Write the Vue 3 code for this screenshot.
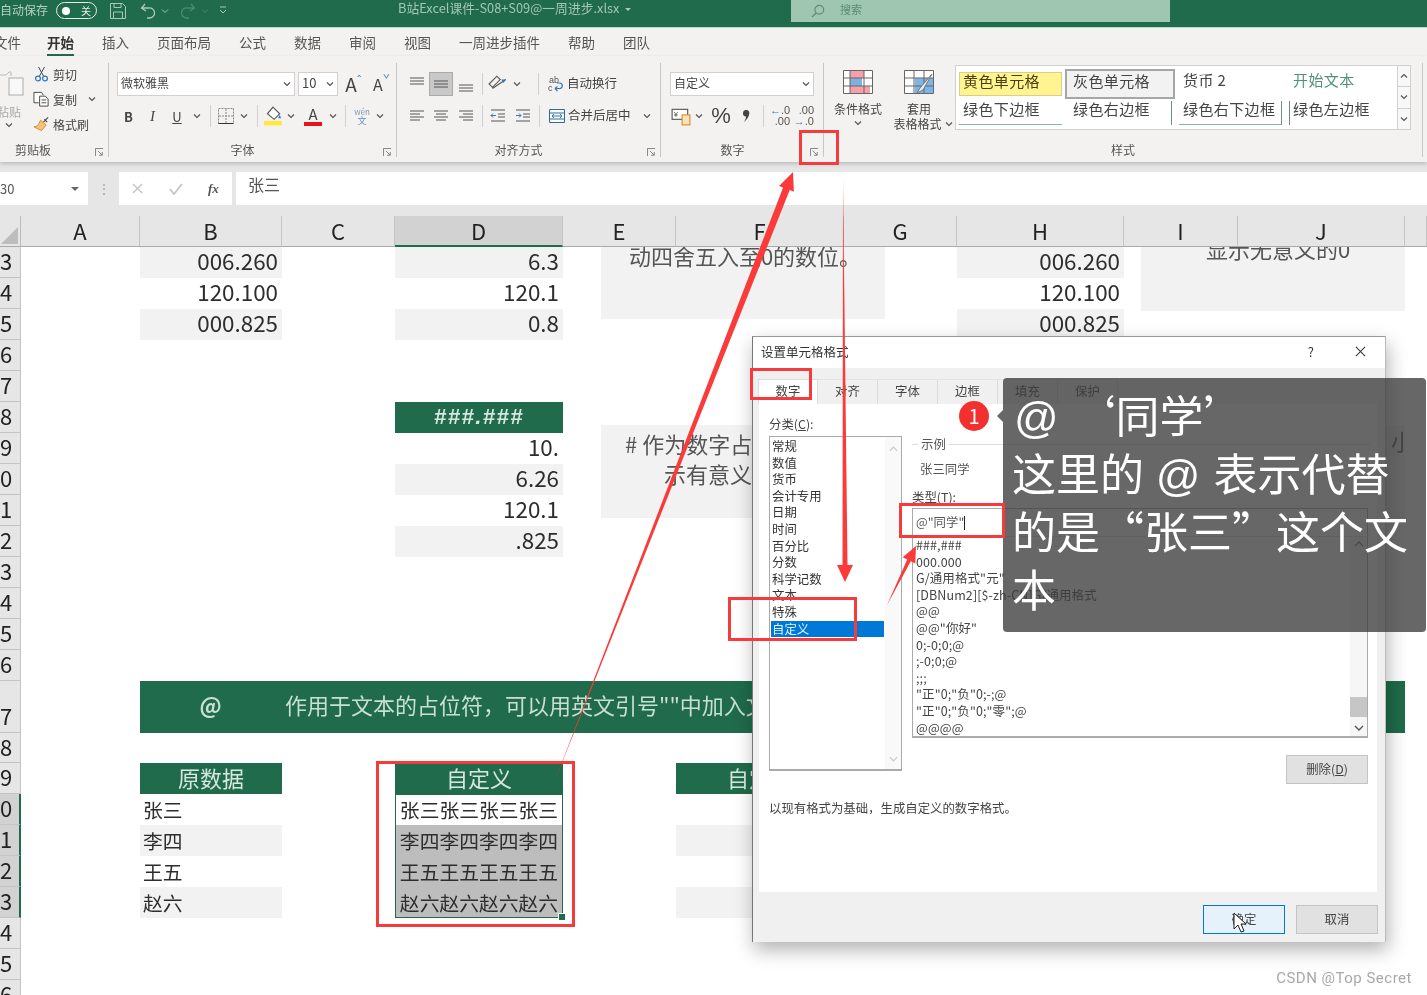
<script setup>
const tabs = ['开始', '插入', '页面布局', '公式', '数据', '审阅', '视图', '一周进步插件', '帮助', '团队']
const cols = ['A', 'B', 'C', 'D', 'E', 'F', 'G', 'H', 'I', 'J', '']
const rowHeads = Array.from({ length: 24 }, (_, i) => {
  const n = i + 3
  return { n, label: String(n % 10), on: n >= 20 && n <= 23, tall: n === 17 }
})
const colIdx = { B: 3, D: 5, F: 7, H: 9 }
const cells = [
  ['B', 3, '006.260', 'end fill'], ['B', 4, '120.100', 'end'], ['B', 5, '000.825', 'end fill'],
  ['D', 3, '6.3', 'end fill'], ['D', 4, '120.1', 'end'], ['D', 5, '0.8', 'end fill'],
  ['H', 3, '006.260', 'end fill'], ['H', 4, '120.100', 'end'], ['H', 5, '000.825', 'end fill'],
  ['D', 8, '###.###', 'mid head hash'], ['D', 9, '10.', 'end'], ['D', 10, '6.26', 'end fill'],
  ['D', 11, '120.1', 'end'], ['D', 12, '.825', 'end fill'],
  ['B', 19, '原数据', 'mid head'], ['D', 19, '自定义', 'mid head'], ['F', 19, '自定义', 'mid head'],
  ['B', 20, '张三', 'start name'], ['B', 21, '李四', 'start name fill'], ['B', 22, '王五', 'start name'], ['B', 23, '赵六', 'start name fill'],
  ['D', 20, '张三张三张三张三', 'mid name'], ['D', 21, '李四李四李四李四', 'mid name picked'],
  ['D', 22, '王五王五王五王五', 'mid name picked'], ['D', 23, '赵六赵六赵六赵六', 'mid name picked'],
  ['F', 21, '', 'fill'], ['F', 23, '', 'fill']
].map(([c, r, text, cls]) => ({ key: c + r, text, cls, style: { gridColumn: colIdx[c], gridRow: r - 1 } }))
const categories = ['常规', '数值', '货币', '会计专用', '日期', '时间', '百分比', '分数', '科学记数', '文本', '特殊', '自定义']
const formats = ['###,###', '000.000', 'G/通用格式"元"', '[DBNum2][$-zh-CN]G/通用格式', '@@', '@@"你好"', '0;-0;0;@', ';-0;0;@', ';;;', '"正"0;"负"0;-;@', '"正"0;"负"0;"零";@', '@@@@']
const dialogTabs = ['数字', '对齐', '字体', '边框', '填充', '保护']
</script>

<template>
  <div class="app">
    <svg class="defs" width="0" height="0">
      <defs>
        <symbol id="chev" viewBox="0 0 8 6"><path d="M1 1.5l3 3 3-3" fill="none" stroke="#555" stroke-width="1.2" /></symbol>
        <symbol id="launch" viewBox="0 0 10 10"><path d="M.5 9V.5H9M3 3l5 5M8 4.5V8H4.5" fill="none" stroke="#777" stroke-width="1" /></symbol>
      </defs>
    </svg>

    <header class="titlebar">
      <span class="autosave">自动保存</span>
      <span class="toggle"><i></i><b>关</b></span>
      <svg class="tb-save" viewBox="0 0 16 16"><path d="M.5.5h12l3 3v12H.5zM4 .5v4h7v-4M3.5 15.5V9h9v6.5" fill="none" stroke="#a9c9b8" /></svg>
      <svg class="tb-undo" viewBox="0 0 16 16"><path d="M5 1L1.5 5 6 8M2 5h7a5 5 0 0 1 1 10H7" fill="none" stroke="#a9c9b8" stroke-width="1.3" /></svg>
      <svg class="tb-c1" viewBox="0 0 8 6"><path d="M1 1.5l3 3 3-3" fill="none" stroke="#a9c9b8" /></svg>
      <svg class="tb-redo" viewBox="0 0 16 16"><path d="M11 1l3.5 4L10 8M14 5H7a5 5 0 0 0-1 10h3" fill="none" stroke="#4f8a6e" stroke-width="1.3" /></svg>
      <svg class="tb-c2" viewBox="0 0 8 6"><path d="M1 1.5l3 3 3-3" fill="none" stroke="#4f8a6e" /></svg>
      <svg class="tb-c3" viewBox="0 0 8 8"><path d="M1 1h6M1 4l3 3 3-3" fill="none" stroke="#a9c9b8" /></svg>
      <span class="doc">B站Excel课件-S08+S09@一周进步.xlsx</span>
      <span class="doc-c"></span>
      <div class="search">
        <svg viewBox="0 0 16 16"><circle cx="9.5" cy="6.5" r="5" fill="none" stroke="#5d8a73" stroke-width="1.3" /><path d="M6 10l-5 5" stroke="#5d8a73" stroke-width="1.5" /></svg>
        <span>搜索</span>
      </div>
    </header>

    <nav class="tabs">
      <span class="tab-file">文件</span>
      <span v-for="t in tabs" :key="t" class="tab" :class="{ on: t === '开始' }">{{ t }}</span>
    </nav>

    <section class="ribbon">
      <div class="group g-clip">
        <div class="clip-body">
          <div class="paste">
            <svg viewBox="0 0 24 30"><path d="M-4 6h10l3-3h2v4" fill="none" stroke="#bbb" /><rect x="9" y="9" width="14" height="17" fill="#f8f8f8" stroke="#aaa" /></svg>
            <span>粘贴</span>
            <svg class="chev c-paste"><use href="#chev" /></svg>
          </div>
          <div class="clip-list">
            <div class="clip-row">
              <svg viewBox="0 0 14 16"><path d="M4 1l5 9M10 1L5 10" fill="none" stroke="#444" /><circle cx="3.5" cy="12.5" r="2.4" fill="none" stroke="#2a78c0" stroke-width="1.2" /><circle cx="10.5" cy="12.5" r="2.4" fill="none" stroke="#2a78c0" stroke-width="1.2" /></svg>
              <span>剪切</span>
            </div>
            <div class="clip-row">
              <svg viewBox="0 0 18 16"><path d="M6 12H1V1h8l2 3M7 5h6l3 3v7.500H7zM9 9h5M9 12h5" fill="#fff" stroke="#444" /></svg>
              <span>复制</span>
              <svg class="chev c-copy"><use href="#chev" /></svg>
            </div>
            <div class="clip-row">
              <svg viewBox="0 0 18 16"><path d="M11 6L16 1M12 3l3 3" stroke="#555" stroke-width="1.4" fill="none" /><path d="M8 4l6 5-5 6-8-4c3 0 5-2 7-7z" fill="#f6c27a" stroke="#d98a2b" /></svg>
              <span>格式刷</span>
            </div>
          </div>
        </div>
        <div class="cap cap-clip">剪贴板</div>
        <svg class="launch"><use href="#launch" /></svg>
      </div>

      <div class="group g-font">
        <div class="row font-r1">
          <div class="select"><span>微软雅黑</span><svg class="chev"><use href="#chev" /></svg></div>
          <div class="select sel-size"><span>10</span><svg class="chev"><use href="#chev" /></svg></div>
          <span class="grow">A<sup>ˆ</sup></span>
          <span class="grow small">A<sup class="blue">ˇ</sup></span>
        </div>
        <div class="row font-r2">
          <b class="fmt">B</b>
          <i class="fmt serif">I</i>
          <u class="fmt">U</u>
          <svg class="chev"><use href="#chev" /></svg>
          <span class="sep"></span>
          <svg class="ico16" viewBox="0 0 16 16"><path d="M.5.5h15v15H.5z" fill="none" stroke="#888" stroke-dasharray="2 1" /><path d="M8 1v14M1 8h14" stroke="#888" stroke-dasharray="2 1" /><path d="M.5 15.500h15" stroke="#333" /></svg>
          <svg class="chev"><use href="#chev" /></svg>
          <span class="sep"></span>
          <svg class="ico18" viewBox="0 0 18 18"><path d="M9 1l6 6-5 5-6-5z" fill="#fff" stroke="#555" /><path d="M15 8l1.500 3-3 0z" fill="#3a7fc4" /><rect x="1" y="13.500" width="16" height="4" fill="#ffe93b" /></svg>
          <svg class="chev"><use href="#chev" /></svg>
          <span class="font-a">A<i></i></span>
          <svg class="chev"><use href="#chev" /></svg>
          <span class="sep"></span>
          <span class="wen">wén<i>文</i></span>
          <svg class="chev"><use href="#chev" /></svg>
        </div>
        <div class="cap cap-off">字体</div>
        <svg class="launch"><use href="#launch" /></svg>
      </div>

      <div class="group g-align">
        <div class="row al-r1">
          <svg class="ico16" viewBox="0 0 16 16"><path d="M1 2h14M1 5h14M1 8h14" stroke="#555" /></svg>
          <span class="boxed"><svg class="ico16" viewBox="0 0 16 16"><path d="M1 5h14M1 8h14M1 11h14" stroke="#555" /></svg></span>
          <svg class="ico16" viewBox="0 0 16 16"><path d="M1 9h14M1 12h14M1 15h14" stroke="#555" /></svg>
          <span class="sep"></span>
          <svg class="ico18" viewBox="0 0 18 18"><path d="M1 9l7-7 3 3-7 7zM4 13l12-8" fill="none" stroke="#555" /><path d="M16 5l-4 0 2 3z" fill="#2a78c0" /></svg>
          <svg class="chev"><use href="#chev" /></svg>
          <span class="sep sep-end"></span>
          <div class="lbl-btn wrap-btn">
            <svg class="ico16" viewBox="0 0 16 16"><text x="1" y="7" font-size="9" fill="#555" font-family="Liberation Sans">ab</text><text x="0" y="15" font-size="9" fill="#555" font-family="Liberation Sans">c</text><path d="M7 12.500h5a2.800 2.800 0 0 0 0-5.500H9M7 12.500l2.500-2M7 12.500l2.500 2.500" fill="none" stroke="#2a78c0" stroke-width="1.200" /></svg>
            <span>自动换行</span>
          </div>
        </div>
        <div class="row al-r2">
          <svg class="ico16" viewBox="0 0 16 16"><path d="M1 3h14M1 6h10M1 9h14M1 12h10" stroke="#555" /></svg>
          <svg class="ico16" viewBox="0 0 16 16"><path d="M1 3h14M3 6h10M1 9h14M3 12h10" stroke="#555" /></svg>
          <svg class="ico16" viewBox="0 0 16 16"><path d="M1 3h14M5 6h10M1 9h14M5 12h10" stroke="#555" /></svg>
          <span class="sep"></span>
          <svg class="ico16" viewBox="0 0 16 16"><path d="M1 2h14M8 6h7M8 9h7M1 13h14" stroke="#555" /><path d="M1 7.500h5M1 7.500l2-2M1 7.500l2 2" fill="none" stroke="#2a78c0" /></svg>
          <svg class="ico16" viewBox="0 0 16 16"><path d="M1 2h14M8 6h7M8 9h7M1 13h14" stroke="#555" /><path d="M1 7.500h5M6 7.500l-2-2M6 7.500l-2 2" fill="none" stroke="#2a78c0" /></svg>
          <span class="sep sep-end"></span>
          <div class="lbl-btn merge-btn">
            <svg class="ico16" viewBox="0 0 16 16"><path d="M.5 1.500h15v13H.5zM.5 5h15M.5 11h15" fill="#fff" stroke="#2c6e91" /><path d="M3 8h10M3 8l2-2M3 8l2 2M13 8l-2-2M13 8l-2 2" fill="none" stroke="#2a78c0" /></svg>
            <span>合并后居中</span>
            <svg class="chev c-merge"><use href="#chev" /></svg>
          </div>
        </div>
        <div class="cap cap-off">对齐方式</div>
        <svg class="launch"><use href="#launch" /></svg>
      </div>

      <div class="group g-num">
        <div class="row num-r1">
          <div class="select"><span>自定义</span><svg class="chev"><use href="#chev" /></svg></div>
        </div>
        <div class="row num-r2">
          <svg class="ico18" viewBox="0 0 18 18"><rect x="1" y="3" width="14" height="9" fill="#fff" stroke="#555" /><text x="2.500" y="10" font-size="7" fill="#555" font-family="Liberation Sans">¥</text><rect x="10" y="8" width="7" height="9" fill="#fbe3b8" stroke="#d98a2b" /></svg>
          <svg class="chev"><use href="#chev" /></svg>
          <span class="pct">%</span>
          <svg class="comma" viewBox="0 0 8 14"><path d="M4 1a3 3 0 0 1 2.800 3.500C6.500 8 4 11 1.500 13 3 10.500 3.500 9 3.500 7.500A3 3 0 0 1 4 1z" fill="#444" /></svg>
          <span class="sep"></span>
          <span class="dec"><em>←</em>.0<br />.00</span>
          <span class="dec">.00<br /><em>→</em>.0</span>
        </div>
        <div class="cap cap-off">数字</div>
        <svg class="launch"><use href="#launch" /></svg>
      </div>

      <div class="group g-style">
        <div class="style-body">
          <div class="big b-cond">
            <svg viewBox="0 0 30 24"><path d="M.5.500h29v23H.5z" fill="#fff" stroke="#666" /><path d="M7 1h14v7H7zM7 16h20v7H7z" fill="#f6a0a8" /><path d="M7 8h12v8H7z" fill="#7fb0e0" /><path d="M7 .5v23M21 .5v23M.5 8h29M.5 16h29" stroke="#666" fill="none" /></svg>
            <span>条件格式</span>
            <svg class="chev"><use href="#chev" /></svg>
          </div>
          <div class="big b-table">
            <svg viewBox="0 0 30 24"><path d="M.5.500h29v23H.5z" fill="#fff" stroke="#666" /><path d="M11 8h18v15H11z" fill="#7fb4e6" /><path d="M10 .5v23M20 .5v23M.5 8h29M.5 16h29" stroke="#666" fill="none" /><path d="M28 4L16 18l-3 5 6-3z" fill="#dff0f6" stroke="#777" /></svg>
            <span>套用</span>
            <span class="nowrap">表格格式<svg class="chev"><use href="#chev" /></svg></span>
          </div>
          <div class="gallery">
            <div class="gal-grid">
              <span class="gal yellow">黄色单元格</span>
              <span class="gal gray">灰色单元格</span>
              <span class="gal">货币 2</span>
              <span class="gal teal">开始文本</span>
              <span class="gal bot">绿色下边框</span>
              <span class="gal rt">绿色右边框</span>
              <span class="gal bot rt">绿色右下边框</span>
              <span class="gal lft">绿色左边框</span>
            </div>
            <div class="gal-scroll">
              <span><svg class="chev up"><use href="#chev" /></svg></span>
              <span><svg class="chev"><use href="#chev" /></svg></span>
              <span class="more"><svg class="chev"><use href="#chev" /></svg></span>
            </div>
          </div>
        </div>
        <div class="cap">样式</div>
      </div>
    </section>

    <section class="formula">
      <div class="namebox"><span>30</span><i></i></div>
      <span class="fdots">⋮</span>
      <div class="fx-btns">
        <svg viewBox="0 0 12 12"><path d="M1 1l10 10M11 1L1 11" stroke="#c4c4c4" stroke-width="1.5" /></svg>
        <svg viewBox="0 0 14 12"><path d="M1 6l4 5 8-10" fill="none" stroke="#c4c4c4" stroke-width="1.8" /></svg>
        <em>fx</em>
      </div>
      <div class="finput">张三</div>
    </section>

    <section class="sheet">
      <div class="corner"><i></i></div>
      <div v-for="(c, i) in cols" :key="i" class="colh" :class="{ on: c === 'D' }">{{ c }}</div>
      <div v-for="r in rowHeads" :key="r.n" class="rowh" :class="{ on: r.on, tall: r.tall }" :style="{ gridRow: r.n - 1 }">{{ r.label }}</div>
      <div v-for="c in cells" :key="c.key" class="cell" :class="c.cls" :style="c.style">{{ c.text }}</div>
      <div class="banner"><span class="b-at">@</span><span class="b-txt">作用于文本的占位符，可以用英文引号""中加入文</span></div>
      <div class="selection"><i></i></div>

      <div class="shape s1"><p>动四舍五入至0的数位。</p></div>
      <div class="shape s2"><p>显示无意义的0</p></div>
      <div class="shape s3"><p class="l1"># 作为数字占</p><p class="l2">示有意义</p></div>
      <div class="shape s4"><p>小</p></div>
    </section>

    <div class="dialog">
      <div class="d-title"><span>设置单元格格式</span><span class="d-help">?</span>
        <svg viewBox="0 0 12 12"><path d="M1 1l10 10M11 1L1 11" stroke="#333" stroke-width="1.1" /></svg>
      </div>
      <div class="d-tabs">
        <span v-for="(t, i) in dialogTabs" :key="t" class="d-tab" :class="{ on: i === 0 }">{{ t }}</span>
      </div>
      <div class="d-panel">
        <div class="d-main">
          <div class="d-left">
            <div class="d-lab">分类(<u>C</u>):</div>
            <div class="cat-list">
              <div v-for="c in categories" :key="c" class="cat" :class="{ on: c === '自定义' }">{{ c }}</div>
              <svg class="cat-up" viewBox="0 0 10 6"><path d="M1 5l4-4 4 4" fill="none" stroke="#c8c8c8" stroke-width="1.3" /></svg>
              <svg class="cat-down" viewBox="0 0 10 6"><path d="M1 1l4 4 4-4" fill="none" stroke="#c8c8c8" stroke-width="1.3" /></svg>
            </div>
          </div>
          <div class="d-right">
            <fieldset class="sample"><legend>示例</legend><div>张三同学</div></fieldset>
            <div class="d-lab type-lab">类型(<u>T</u>):</div>
            <div class="type-input">@"同学"<i></i></div>
            <div class="fmt-list">
              <div v-for="f in formats" :key="f" class="fmt-item">{{ f }}</div>
              <div class="fmt-bar">
                <svg class="fb-up" viewBox="0 0 10 6"><path d="M1 5l4-4 4 4" fill="none" stroke="#777" stroke-width="1.4" /></svg>
                <i></i>
                <svg class="fb-down" viewBox="0 0 10 6"><path d="M1 1l4 4 4-4" fill="none" stroke="#555" stroke-width="1.4" /></svg>
              </div>
            </div>
            <div class="del-row"><span class="d-btn">删除(<u>D</u>)</span></div>
          </div>
        </div>
        <div class="d-desc">以现有格式为基础，生成自定义的数字格式。</div>
      </div>
      <div class="d-foot">
        <span class="d-btn ok">确定</span>
        <span class="d-btn">取消</span>
      </div>
    </div>

    <div class="tip">
      <div><span class="at">@</span>&nbsp;‘同学’</div>
      <div>这里的 <span class="at">@</span> 表示代替</div>
      <div>的是“张三”这个文</div>
      <div>本</div>
    </div>
    <span class="tip-arrow"></span>
    <span class="badge">1</span>

    <svg class="arrows" viewBox="0 0 1427 995">
      <polygon points="554,783 783.100,187.500 779,185.900 793,172 793.900,191.700 789.700,190.100" />
      <polygon points="843,180 847.500,565 853,565 845,582 837,565 842.500,565" />
      <polygon points="887,605 907.200,559.500 902.700,557.300 916,546 915.300,563.500 910.800,561.300" />
    </svg>
    <i class="rb r-launch"></i>
    <i class="rb r-tab"></i>
    <i class="rb r-type"></i>
    <i class="rb r-cat"></i>
    <i class="rb r-sel"></i>

    <svg class="cursor" viewBox="0 0 14 22"><path d="M1 1v16l4-4 3 7 3-1-3-7h5z" fill="#fff" stroke="#222" /></svg>
    <span class="mark">CSDN @Top Secret</span>
  </div>
</template>

<style>
html, body { margin: 0; background: #fff; }
</style>

<style scoped>
.app {
  position: relative;
  width: 1427px;
  height: 995px;
  overflow: hidden;
  background: #fff;
  color: #333;
  font-family: "Noto Sans CJK SC", "Noto Sans", sans-serif;
  filter: blur(.35px);
}
.app p { margin: 0; }
.defs { position: absolute; }
.chev { width: 8px; height: 6px; flex: none; justify-self: center; }
.ico16 { width: 16px; height: 16px; justify-self: center; }
.ico18 { width: 20px; height: 20px; justify-self: center; }

/* title bar */
.titlebar {
  height: 27px;
  background: #1f6b4b;
  border-bottom: 1px solid #b9dcc8;
  display: flex;
  align-items: flex-start;
  color: #a9c9b8;
  font-size: 12px;
}
.autosave { width: 56px; line-height: 19px; flex: none; color: #b6d2c3; }
.toggle {
  height: 15px; margin-top: 2px; flex: none;
  border: 1.500px solid #e4efe9; border-radius: 9px;
  display: flex; align-items: center; justify-content: space-between;
  padding: 0 5px; box-sizing: content-box; width: 29px;
  font-size: 10px; color: #e8f2ec;
}
.toggle i { width: 8px; height: 8px; border-radius: 50%; background: #fff; }
.toggle b { font-weight: 400; }
.tb-save { width: 16px; height: 16px; margin: 3px 0 0 13px; flex: none; }
.tb-undo { width: 16px; height: 16px; margin: 3px 0 0 14px; flex: none; }
.tb-c1 { width: 8px; height: 6px; margin: 8px 0 0 5px; flex: none; }
.tb-redo { width: 16px; height: 16px; margin: 3px 0 0 11px; flex: none; }
.tb-c2 { width: 8px; height: 6px; margin: 8px 0 0 5px; flex: none; }
.tb-c3 { width: 8px; height: 8px; margin: 6px 0 0 10px; flex: none; }
.doc { margin-left: 171px; line-height: 16px; flex: none; white-space: nowrap; color: #a3c6b3; font-size: 12.800px; }
.doc-c {
  width: 0; height: 0; margin: 8px 0 0 6px; flex: none;
  border: 3px solid transparent; border-top: 3px solid #a9c9b8; border-bottom: 0;
}
.search {
  margin: 0 257px 0 auto; width: 379px; height: 22px; flex: none;
  background: #9ec6b1; display: flex; align-items: center;
  color: #5d8a73; font-size: 11px;
}
.search svg { width: 14px; height: 14px; margin: 0 15px 0 20px; }
.search span { padding-bottom: 4px; }

/* ribbon tabs */
.tabs {
  height: 28px;
  background: #f3f2f1;
  display: flex;
  align-items: center;
  gap: 28px;
  font-size: 13.500px;
  color: #555;
  white-space: nowrap;
}
.tab-file { margin-left: -6px; width: 25px; }
.tab { position: relative; line-height: 28px; }
.tab.on { color: #333; font-weight: 700; }
.tab.on::after {
  content: ""; position: absolute; left: 0; right: 0; bottom: -1px;
  height: 3px; background: #1f6b4b;
}

/* ribbon */
.ribbon {
  height: 106px;
  background: #f3f2f1;
  display: flex;
  align-items: flex-start;
  box-shadow: 0 2px 4px rgba(0, 0, 0, .18);
  position: relative;
  z-index: 1;
  font-size: 12px;
  color: #444;
}
.group {
  position: relative;
  height: 94px;
  margin-top: 7px;
  padding-top: 9px;
  box-sizing: border-box;
  display: flex;
  flex-direction: column;
  border-right: 1px solid #c8c6c4;
  flex: none;
}
.cap { margin-top: auto; height: 14px; line-height: 14px; text-align: center; font-size: 12px; color: #555; flex: none; }
.cap-off { padding-right: 28px; }
.launch { position: absolute; right: 4px; bottom: 0; width: 9px; height: 9px; }
.row { display: grid; align-items: center; height: 24px; }
.row + .row { margin-top: 8px; }
.sep { width: 1px; height: 22px; background: #d2d0ce; justify-self: center; }
.sep-end { justify-self: end; }
.select {
  height: 24px; background: #fff; border: 1px solid #d2d0ce; box-sizing: border-box;
  display: flex; align-items: center; justify-content: space-between;
  padding: 0 3px; font-size: 12px;
}
.select span { padding-bottom: 3px; }

/* clipboard */
.g-clip { width: 109px; }
.clip-body { display: flex; height: 66px; }
.paste { width: 33px; position: relative; display: flex; flex-direction: column; }
.paste svg:first-child { width: 24px; height: 30px; margin-top: -3px; }
.paste span { margin: 6px 0 0 -3px; font-size: 12px; line-height: 14px; color: #aaa; width: 30px; }
.c-paste { margin: 3px 0 0 5px; }
.clip-list { margin-top: -8px; display: flex; flex-direction: column; gap: 5px; }
.clip-row { height: 20px; display: flex; align-items: center; gap: 3px; white-space: nowrap; }
.clip-row svg:first-child { width: 17px; height: 16px; flex: none; }
.c-copy { margin-left: 8px; }
.cap-clip { text-align: left; padding-left: 15px; }

/* font */
.g-font { width: 288px; padding-left: 8px; }
.font-r1 { grid-template-columns: 178px 40px 25px 25px; column-gap: 3px; }
.sel-size span { font-size: 13px; }
.grow { font-size: 19px; line-height: 22px; color: #444; text-align: center; white-space: nowrap; }
.grow.small { font-size: 16px; }
.grow sup { font-size: 12px; line-height: 0; color: #4a8bc4; }
.font-r2 { grid-template-columns: 23px 25px 24px 15px 12px 20px 16px 10px 22px 14px 30px 10px 14px 20px 16px; }
.fmt { text-align: center; font-size: 13px; color: #444; }
.serif { font-family: "Liberation Serif", serif; font-size: 15px; }
.font-a { position: relative; justify-self: center; font-size: 15px; line-height: 16px; padding-bottom: 4px; width: 18px; text-align: center; }
.font-a i { position: absolute; left: 0; right: 0; bottom: 0; height: 4px; background: #e0161c; }
.wen { font-size: 8px; line-height: 9px; text-align: center; color: #7a9ab8; }
.wen i { display: block; font-style: normal; font-size: 9px; color: #5a8fc4; }

/* alignment */
.g-align { width: 264px; padding-left: 8px; }
.al-r1 { grid-template-columns: 24px 24px 26px 6px 26px 12px 16px auto; }
.al-r2 { grid-template-columns: 24px 24px 26px 6px 26px 24px 5px auto; }
.boxed {
  width: 24px; height: 24px; background: #c8c8c8; border: 1px solid #aaa; box-sizing: border-box;
  display: flex; align-items: center; justify-content: center;
}
.lbl-btn { display: flex; align-items: center; gap: 3px; white-space: nowrap; font-size: 12.500px; }
.lbl-btn span { padding-bottom: 3px; }
.wrap-btn { margin-left: 9px; }
.merge-btn { margin-left: 9px; }
.c-merge { margin-left: 9px; }

/* number */
.g-num { width: 163px; padding-left: 9px; }
.num-r1 { grid-template-columns: 144px; }
.num-r2 { grid-template-columns: 22px 14px 30px 20px 14px 20px 24px; }
.pct { font-size: 22px; text-align: center; color: #444; line-height: 24px; font-family: "Liberation Sans", sans-serif; }
.comma { width: 9px; height: 14px; justify-self: center; }
.dec { font-size: 11px; line-height: 11px; text-align: right; color: #555; white-space: nowrap; font-family: "Liberation Sans", sans-serif; }
.dec em { color: #2a78c0; font-style: normal; font-weight: 700; }

/* styles */
.g-style { width: 599px; padding-top: 2px; }
.style-body { display: flex; align-items: flex-start; }
.big { display: flex; flex-direction: column; align-items: center; padding-top: 5px; line-height: 15px; font-size: 12px; flex: none; }
.big > svg:first-child { width: 30px; height: 24px; margin-bottom: 7px; }
.big .chev { margin-top: 4px; }
.b-cond { width: 68px; }
.b-table { width: 54px; margin-left: 0; }
.nowrap { white-space: nowrap; display: inline-flex; align-items: center; gap: 3px; margin-right: -8px; }
.nowrap .chev { margin-top: 0; }
.gallery {
  margin-left: 9px; width: 456px; height: 65px; box-sizing: border-box;
  background: #fff; border: 1px solid #d2d0ce; display: flex; flex: none;
}
.gal-grid {
  width: 441px; padding: 6px 0 0 3px; box-sizing: border-box;
  display: grid; grid-template-columns: repeat(4, 110px); grid-auto-rows: 24px; row-gap: 5px;
}
.gal {
  width: 103px; box-sizing: border-box; padding-left: 4px; font-size: 15px; letter-spacing: .4px;
  line-height: 16px; white-space: nowrap; color: #444;
}
.yellow { background: #fff48f; border: 1px solid #d9cf8c; padding-left: 3px; color: #4a3f10; }
.gray {
  margin: -3px 0; width: 110px; height: 30px; line-height: 20px; margin-left: -4px; padding-left: 6px;
  background: #f2f2f2; border: 2px solid #a6a6a6; box-sizing: border-box;
}
.teal { color: #4f917c; }
.bot { border-bottom: 1.500px solid #8fb5a8; }
.rt { border-right: 1.500px solid #6f8f85; }
.lft { border-left: 1.500px solid #6f8f85; width: 100px; padding-left: 3px; }
.gal-scroll { width: 14px; margin-left: auto; display: flex; flex-direction: column; border-left: 1px solid #d2d0ce; }
.gal-scroll span { flex: 1; display: flex; align-items: center; justify-content: center; background: #f8f8f8; border-bottom: 1px solid #d2d0ce; }
.gal-scroll .up { transform: rotate(180deg); }
.gal-scroll .more { border-bottom: 0; }

/* formula bar */
.formula {
  height: 54px;
  box-sizing: border-box;
  padding-top: 10px;
  background: #e6e6e6;
  display: flex;
  align-items: flex-start;
}
.namebox {
  width: 88px; height: 33px; background: #fff; box-sizing: border-box; flex: none;
  display: flex; align-items: center; justify-content: space-between; padding: 0 9px 0 0;
  font-size: 13px; color: #555;
}
.namebox i { width: 0; height: 0; border: 4px solid transparent; border-top: 4px solid #666; border-bottom: 0; }
.fdots { width: 31px; height: 33px; line-height: 33px; text-align: center; color: #aaa; font-size: 14px; flex: none; }
.fx-btns {
  width: 113px; height: 33px; background: #fff; flex: none;
  display: flex; align-items: center; box-sizing: border-box; padding-left: 13px;
}
.fx-btns svg:nth-child(1) { width: 11px; height: 11px; }
.fx-btns svg:nth-child(2) { width: 14px; height: 12px; margin-left: 26px; }
.fx-btns em { margin-left: 25px; font: italic 700 13px "Liberation Serif", serif; color: #555; }
.finput {
  margin-left: 4px; flex: 1; height: 33px; background: #fff; padding-left: 12px;
  font-size: 16px; line-height: 24px; color: #555;
}

/* sheet */
.sheet {
  position: relative;
  height: 779px;
  display: grid;
  grid-template-columns: 21px 119px 142px 113px 168px 113px 168px 113px 167px 114px 167px 22px;
  grid-template-rows: 31px repeat(14, 31px) 52px 30px repeat(9, 31px);
  background: #fff;
  overflow: hidden;
  color: #2d2d2d;
  font-size: 22.400px;
}
.corner {
  grid-area: 1 / 1; position: relative; z-index: 3; background: #e6e6e6;
  border-right: 1px solid #bbb; border-bottom: 1px solid #aaa; box-sizing: border-box;
}
.corner i {
  position: absolute; right: 2px; bottom: 2px; width: 0; height: 0;
  border-left: 17px solid transparent; border-bottom: 17px solid #bdbdbd;
}
.colh {
  position: relative; z-index: 3; background: #e6e6e6; text-align: center; line-height: 29px;
  border-right: 1px solid #c4c4c4; border-bottom: 1px solid #aaa; box-sizing: border-box;
  color: #222; font-size: 22px;
}
.colh.on { background: #d2d2d2; border-bottom: 2px solid #1f6b4b; }
.rowh {
  grid-column: 1; position: relative; z-index: 3; background: #e6e6e6; color: #222;
  border-right: 1px solid #c4c4c4; border-bottom: 1px solid #c4c4c4; box-sizing: border-box;
  line-height: 27px; overflow: hidden; padding-left: 0; font-size: 22px;
}
.rowh.tall { line-height: 68px; }
.rowh.on { background: #d2d2d2; border-right: 2px solid #1f6b4b; }
.cell { display: flex; align-items: center; white-space: nowrap; overflow: hidden; min-width: 0; padding-bottom: 6px; box-sizing: border-box; }
.mid { justify-content: center; }
.end { justify-content: flex-end; padding-right: 4px; }
.start { padding-left: 3px; }
.fill { background: #f2f2f2; }
.head { background: #1f6b4b; color: #d7e6de; padding-bottom: 4px; font-size: 22px; }
.hash { font-style: italic; font-weight: 700; font-family: "Liberation Sans", sans-serif; letter-spacing: 1.500px; padding-bottom: 1px; }
.name { font-size: 19.800px; padding-bottom: 0; }
.picked { background: #bdbdbd; }
.banner {
  grid-column: 3 / 12; grid-row: 16;
  background: #1f6b4b; color: #c9dfd3;
  display: flex; align-items: center; padding-bottom: 6px; font-size: 22px;
}
.b-at { width: 141px; text-align: center; font-weight: 700; }
.b-txt { margin-left: 4px; white-space: nowrap; }
.selection {
  grid-column: 5; grid-row: 19 / 23;
  border: 1.500px solid #1f6b4b; position: relative; pointer-events: none;
}
.selection i {
  position: absolute; right: -4px; bottom: -4px; width: 6px; height: 6px;
  background: #1f6b4b; border: 1px solid #fff;
}
.shape { position: absolute; background: #f2f2f2; overflow: hidden; font-size: 22px; line-height: 30px; color: #555; white-space: nowrap; }
.s1 { left: 601px; top: 31px; width: 284px; height: 72px; text-align: center; }
.s1 p { margin-top: -7px !important; margin-left: 4px !important; }
.s2 { left: 1141px; top: 31px; width: 264px; height: 64px; text-align: center; }
.s2 p { margin-top: -14px !important; margin-left: 10px !important; }
.s3 { left: 601px; top: 209px; width: 284px; height: 93px; padding-top: 3px; box-sizing: border-box; }
.s3 .l1 { padding-left: 24px; }
.s3 .l2 { padding: 0 0 0 63px; }
.s4 { left: 1141px; top: 209px; width: 264px; height: 93px; box-sizing: border-box; text-align: right; }
.s4 p { margin-right: -8px !important; }

/* dialog */
.dialog {
  position: absolute; left: 752px; top: 336px; width: 634px; height: 606px; z-index: 5;
  background: #f0f0f0; border-left: 1.500px solid #777; border-top: 1px solid #999; border-right: 1px solid #bbb;
  box-sizing: border-box;
  box-shadow: 2px 8px 18px rgba(0, 0, 0, .3);
  display: flex; flex-direction: column;
  font-size: 12.400px; color: #444;
}
.d-title {
  height: 31px; background: #fff; display: flex; align-items: center; flex: none;
  padding: 0 0 2px 8px; box-sizing: border-box; font-size: 12.500px; color: #333;
}
.d-help { margin-left: auto; font-size: 13px; }
.d-title svg { width: 11px; height: 11px; margin: 0 19px 0 41px; }
.d-tabs { height: 36px; display: flex; align-items: flex-end; padding-left: 5px; flex: none; }
.d-tab {
  width: 60px; height: 25px; line-height: 22px; text-align: center; box-sizing: border-box;
  border-right: 1px solid #dcdcdc; border-top: 1px solid #e4e4e4; background: #f0f0f0;
}
.d-tab.on { background: #fff; border: 1px solid #dcdcdc; border-bottom: 0; }
.d-panel { margin: 0 8px 0 6px; height: 488px; background: #fff; padding: 13px 0 0 10px; box-sizing: border-box; flex: none; }
.d-main { display: flex; gap: 10px; height: 354px; }
.d-left { width: 133px; flex: none; }
.d-lab { height: 14px; line-height: 14px; }
.cat-list {
  position: relative; margin-top: 5px; height: 335px; border: 1px solid #aaa; border-bottom-width: 2px;
  box-sizing: border-box; padding: 1px 1px 0 1px; background: linear-gradient(90deg, #fff 115px, #f9f9f9 115px);
}
.cat { height: 16.600px; line-height: 16.600px; width: 113px; padding-left: 1px; box-sizing: border-box; color: #333; }
.cat.on { background: #0078d7; color: #e6f2fb; }
.cat-up, .cat-down { position: absolute; right: 3px; width: 9px; height: 6px; }
.cat-up { top: 9px; }
.cat-down { bottom: 7px; }
.d-right { width: 456px; flex: none; }
.sample {
  margin: 20px -2px 0 0; padding: 10px 8px 8px; border: 0; border-top: 1px solid #ddd;
  box-sizing: border-box; height: 49px; min-width: 0; line-height: 16px; color: #555;
}
.sample legend { padding: 0 3px; margin-left: -2px; line-height: 14px; height: 14px; }
.type-lab { margin-top: 4px; }
.type-input {
  margin-top: 4px; height: 29px; box-sizing: border-box; border: 1px solid #aaa; border-bottom-color: #ddd;
  padding-left: 3px; line-height: 26px; color: #555; background: #fff;
}
.type-input i { display: inline-block; width: 1px; height: 14px; background: #222; vertical-align: -3px; }
.fmt-list { position: relative; height: 201px; border: 1px solid #aaa; border-top: 0; border-bottom-width: 2px; box-sizing: border-box; padding: 0 0 0 3px; overflow: hidden; }
.fmt-item { height: 16.600px; line-height: 16.600px; white-space: nowrap; color: #444; font-size: 12.500px; letter-spacing: .1px; }
.fmt-bar { position: absolute; top: 0; right: 0; bottom: 0; width: 17px; background: #f6f6f6; display: flex; flex-direction: column; align-items: center; }
.fmt-bar svg { width: 10px; height: 6px; flex: none; }
.fb-up { margin-top: 4px; }
.fmt-bar i { width: 100%; height: 20px; background: #c6c6c6; margin-top: auto; margin-bottom: 8px; }
.fb-down { margin-bottom: 5px; }
.del-row { display: flex; justify-content: flex-end; margin-top: 17px; }
.d-btn {
  width: 82px; height: 29px; line-height: 26px; text-align: center; box-sizing: border-box;
  background: #e1e1e1; border: 1px solid #c4c4c4; color: #444; flex: none;
}
.d-desc { margin-top: 30px; line-height: 14px; }
.d-foot { flex: 1; display: flex; justify-content: flex-end; align-items: flex-start; gap: 11px; padding: 13px 7px 0 0; }
.ok { background: #e5f1fb; border-color: #0078d7; }

/* tooltip */
.tip {
  position: absolute; left: 1003px; top: 378px; width: 423px; height: 254px; z-index: 6;
  background: rgba(60, 60, 60, .78); border-radius: 4px; box-sizing: border-box;
  padding: 7px 0 0 9px; color: #fff; font-size: 44px; line-height: 58px; white-space: nowrap;
}
.at { font-family: "Liberation Sans", sans-serif; margin: 0 3px 0 2px; line-height: 0; }
.tip-arrow {
  position: absolute; left: 997px; top: 410px; z-index: 6; width: 0; height: 0;
  border: 6px solid transparent; border-right-color: rgba(60, 60, 60, .78); border-left: 0;
}
.badge {
  position: absolute; left: 959px; top: 401px; z-index: 6; width: 30px; height: 30px; border-radius: 50%;
  background: #f23030; color: #fff; text-align: center; font-size: 20px; line-height: 29px;
}
.arrows { position: absolute; inset: 0; width: 1427px; height: 995px; z-index: 7; pointer-events: none; }
.arrows polygon { fill: #fb3a3a; }
.rb { position: absolute; z-index: 7; border: 3px solid #f53b3b; box-sizing: border-box; }
.r-launch { left: 799px; top: 130px; width: 40px; height: 35px; }
.r-tab { left: 750px; top: 368px; width: 62px; height: 32px; }
.r-type { left: 899px; top: 503px; width: 106px; height: 35px; }
.r-cat { left: 728px; top: 597px; width: 129px; height: 44px; }
.r-sel { left: 376px; top: 761px; width: 199px; height: 166px; }
.cursor { position: absolute; left: 1233px; top: 912px; width: 14px; height: 22px; z-index: 8; }
.mark { position: absolute; right: 15px; top: 968px; z-index: 8; font: 15px/20px Roboto, sans-serif; letter-spacing: .5px; color: #a8a8a8; }
</style>
